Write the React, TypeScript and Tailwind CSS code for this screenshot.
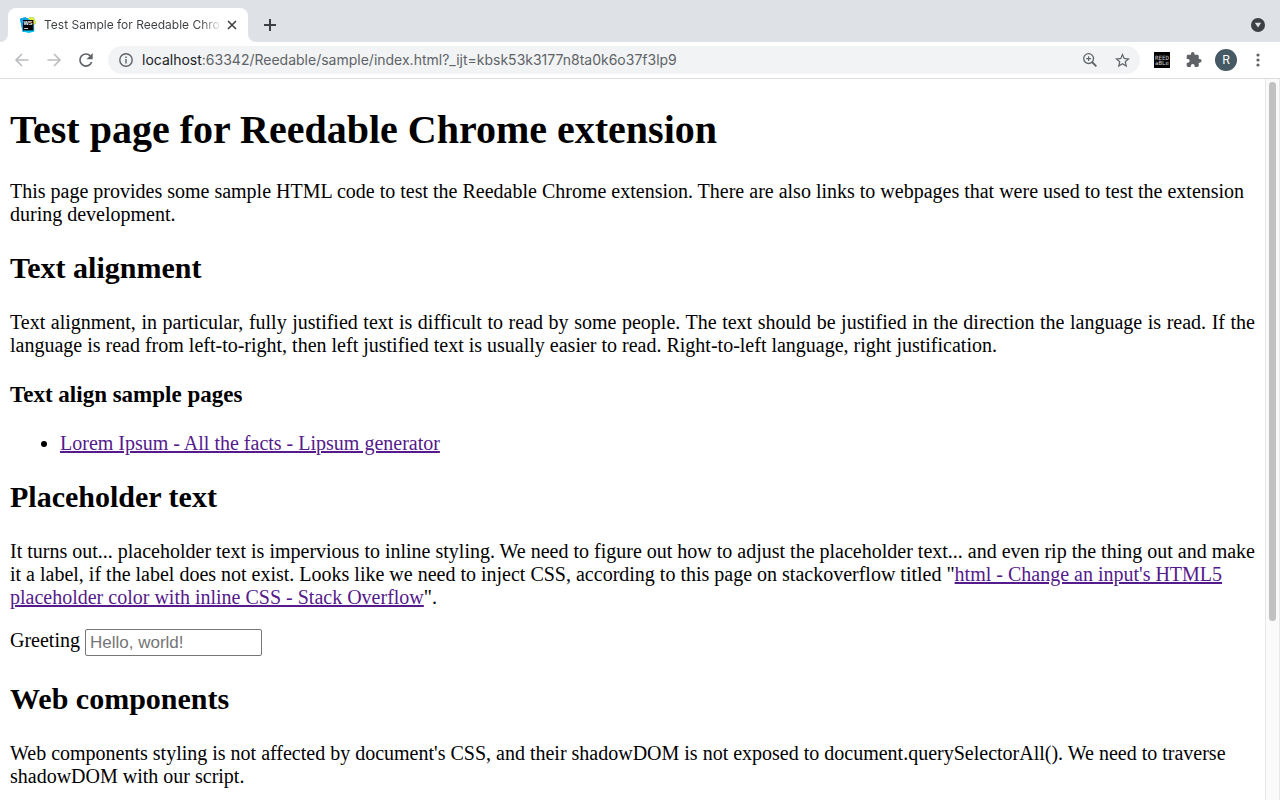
import React from "react";

function WebStormIcon() {
  return (
    <svg viewBox="0 0 16 16" className="size-4 shrink-0" aria-hidden="true">
      <path d="M2.5 14.5 0 1.8 5 .3l3 1.2L10.5 0 14 .8 16 6l-2 2 .4 6.4L9 16Z" fill="#07c3f2" />
      <path d="M0 1.8 5 .3l3 1.2L4 14.9l-1.5-.4Z" fill="#149ee8" />
      <path d="m8 1.6 2.5-1.6 3.5.8L16 6l-2 1.5-3-4Z" fill="#e5ec3a" />
      <rect x="3" y="3" width="10.4" height="10.4" fill="#000" />
      <text x="3.6" y="8.2" fontSize="5.6" fontWeight="700" fill="#fff" fontFamily="Liberation Sans, sans-serif">WS</text>
      <rect x="4.2" y="11" width="4" height="0.8" fill="#fff" />
    </svg>
  );
}

function ReedableIcon() {
  return (
    <svg viewBox="0 0 16 16" className="size-4" aria-hidden="true">
      <rect width="16" height="16" fill="#000" />
      <g fill="#d0d0d0" fontSize="5.8" fontFamily="DejaVu Sans Mono, monospace">
        <text x="1" y="7.8">REED</text>
        <text x="1" y="12.8">aBLe</text>
      </g>
    </svg>
  );
}

const iconButton = "flex size-7 shrink-0 items-center justify-center rounded-full";

function TabStrip() {
  return (
    <header className="flex h-[42px] shrink-0 items-end bg-[#dee1e6]">
      <svg viewBox="0 0 8 8" className="size-2 shrink-0" aria-hidden="true">
        <path d="M8 0v8H0a8 8 0 0 0 8-8Z" fill="#fff" />
      </svg>
      <div className="flex h-[34px] w-60 items-center rounded-t-lg bg-white pr-[6px] pl-3">
        <WebStormIcon />
        <span className="ml-2 h-5 grow overflow-hidden bg-linear-to-r from-[#3c4043] from-88% to-transparent bg-clip-text text-[12px] leading-5 whitespace-nowrap text-transparent">
          Test Sample for Reedable Chro
        </span>
        <button aria-label="Close tab" className="flex size-5 shrink-0 items-center justify-center">
          <svg viewBox="0 0 10 10" className="size-[10px]" stroke="#3c4043" strokeWidth="1.6">
            <path d="m1 1 8 8M9 1 1 9" />
          </svg>
        </button>
      </div>
      <svg viewBox="0 0 8 8" className="size-2 shrink-0" aria-hidden="true">
        <path d="M0 0v8h8a8 8 0 0 1-8-8Z" fill="#fff" />
      </svg>
      <button aria-label="New tab" className="flex h-[34px] w-7 items-center justify-center">
        <svg viewBox="0 0 12 12" className="size-3" stroke="#3c4043" strokeWidth="2">
          <path d="M6 0v12M0 6h12" />
        </svg>
      </button>
      <button aria-label="Search tabs" className="mr-2 ml-auto flex h-[34px] w-7 items-center justify-center">
        <svg viewBox="0 0 14 14" className="size-[14px]">
          <circle cx="7" cy="7" r="7" fill="#3c4043" />
          <path d="M3.8 4.8h6.4L7 9.6Z" fill="#dee1e6" />
        </svg>
      </button>
    </header>
  );
}

function Toolbar() {
  return (
    <nav className="flex h-[37px] shrink-0 items-center border-b border-[#dadce0] bg-white px-2" aria-label="Browser toolbar">
      <div className="flex gap-1">
        <button aria-label="Back" className={iconButton}>
          <svg viewBox="0 0 16 16" className="size-4" fill="none" stroke="#babcbe" strokeWidth="1.6">
            <path d="M14.5 8h-12M8 2 2 8l6 6" />
          </svg>
        </button>
        <button aria-label="Forward" className={iconButton}>
          <svg viewBox="0 0 16 16" className="size-4" fill="none" stroke="#babcbe" strokeWidth="1.6">
            <path d="M1.5 8h12M8 2l6 6-6 6" />
          </svg>
        </button>
        <button aria-label="Reload" className={iconButton}>
          <svg viewBox="0 0 16 16" className="size-4">
            <path d="M13.6 10A6 6 0 1 1 12.4 4" fill="none" stroke="#5f6368" strokeWidth="1.7" />
            <path d="M14.7 1v6.2H8.5Z" fill="#5f6368" />
          </svg>
        </button>
      </div>
      <div className="ml-2 flex h-7 grow items-center rounded-full bg-[#f1f3f4] pr-1 pl-[11px]">
        <svg viewBox="0 0 14 14" className="size-[14px] shrink-0" aria-hidden="true">
          <circle cx="7" cy="7" r="6.2" fill="none" stroke="#5f6368" strokeWidth="1.4" />
          <path d="M6.3 6h1.4v4.4H6.3ZM6.3 3.5h1.4v1.4H6.3Z" fill="#5f6368" />
        </svg>
        <span className="ml-[9px] grow text-[14px] leading-5 whitespace-nowrap text-[#5f6368]">
          <span className="text-[#202124]">localhost</span>:63342/Reedable/sample/index.html?_ijt=kbsk53k3177n8ta0k6o37f3lp9
        </span>
        <button aria-label="Zoom" className={iconButton}>
          <svg viewBox="0 0 14 14" className="size-[14px]" fill="none" stroke="#5f6368">
            <circle cx="5.6" cy="5.6" r="4.9" strokeWidth="1.3" />
            <path d="m9 9 4.4 4.4" strokeWidth="1.8" />
            <path d="M5.6 3.2V8M3.2 5.6H8" strokeWidth="1.1" />
          </svg>
        </button>
        <button aria-label="Bookmark this page" className={`${iconButton} ml-1`}>
          <svg viewBox="2 2 20 20" className="size-[15px]" fill="#5f6368">
            <path d="m22 9.24-7.19-.62L12 2 9.19 8.63 2 9.24l5.46 4.73L5.82 21 12 17.27 18.18 21l-1.63-7.03L22 9.24ZM12 15.4l-3.76 2.27 1-4.28-3.32-2.88 4.38-.38L12 6.1l1.71 4.04 4.38.38-3.32 2.88 1 4.28L12 15.4Z" />
          </svg>
        </button>
      </div>
      <div className="ml-2 flex gap-1">
        <button aria-label="Reedable" className={iconButton}>
          <ReedableIcon />
        </button>
        <button aria-label="Extensions" className={iconButton}>
          <svg viewBox="1 1 24 24" className="size-[17px]" fill="#5f6368">
            <path d="M20.5 11H19V7c0-1.1-.9-2-2-2h-4V3.5a2.5 2.5 0 0 0-5 0V5H4c-1.1 0-1.99.9-1.99 2v3.8H3.5c1.49 0 2.7 1.21 2.7 2.7s-1.21 2.7-2.7 2.7H2V20c0 1.1.9 2 2 2h3.8v-1.5c0-1.49 1.21-2.7 2.7-2.7 1.49 0 2.7 1.21 2.7 2.7V22H17c1.1 0 2-.9 2-2v-4h1.5a2.5 2.5 0 0 0 0-5Z" />
          </svg>
        </button>
        <button aria-label="Profile" className={iconButton}>
          <span className="flex size-[22px] items-center justify-center rounded-full bg-[#455a64] text-[12px] leading-none text-white">R</span>
        </button>
        <button aria-label="Menu" className={iconButton}>
          <svg viewBox="0 0 4 14" className="h-[14px] w-1" fill="#5f6368">
            <circle cx="2" cy="2" r="1.6" />
            <circle cx="2" cy="7" r="1.6" />
            <circle cx="2" cy="12" r="1.6" />
          </svg>
        </button>
      </div>
    </nav>
  );
}

const heading = "mt-6 mb-[26px] text-[30px] leading-[35px] font-bold";
const link = "text-[#551a8b] underline";

function SamplePage() {
  return (
    <main className="min-w-0 grow overflow-hidden px-[10px] font-['Liberation_Serif',serif] text-[20px] leading-[23px] text-black">
      <h1 className="my-7 text-[40px] leading-[45px] font-bold">Test page for Reedable Chrome extension</h1>
      <p className="my-5">
        This page provides some sample HTML code to test the Reedable Chrome extension. There are also links to webpages
        that were used to test the extension during development.
      </p>
      <h2 className={heading}>Text alignment</h2>
      <p className="my-5 text-justify">
        Text alignment, in particular, fully justified text is difficult to read by some people. The text should be
        justified in the direction the language is read. If the language is read from left-to-right, then left justified
        text is usually easier to read. Right-to-left language, right justification.
      </p>
      <h3 className="my-6 text-[23px] leading-[27px] font-bold">Text align sample pages</h3>
      <ul className="my-5 list-disc pl-[50px]">
        <li>
          <a href="#lipsum" className={link}>Lorem Ipsum - All the facts - Lipsum generator</a>
        </li>
      </ul>
      <h2 className={heading}>Placeholder text</h2>
      <p className="my-5">
        It turns out... placeholder text is impervious to inline styling. We need to figure out how to adjust the
        placeholder text... and even rip the thing out and make it a label, if the label does not exist. Looks like we
        need to inject CSS, according to this page on stackoverflow titled "
        <a href="#placeholder-color" className={link}>
          html - Change an input's HTML5 placeholder color with inline CSS - Stack Overflow
        </a>
        ".
      </p>
      <div className="my-5 flex h-7 items-start gap-[5px]">
        <label htmlFor="greeting">Greeting</label>
        <input
          id="greeting"
          type="text"
          placeholder="Hello, world!"
          className="h-[27px] w-[177px] rounded-xs border border-[#767676] bg-white px-1 font-['Liberation_Sans',sans-serif] text-[17px] placeholder:text-[#757575]"
        />
      </div>
      <h2 className={heading}>Web components</h2>
      <p className="my-5">
        Web components styling is not affected by document's CSS, and their shadowDOM is not exposed to
        document.querySelectorAll(). We need to traverse shadowDOM with our script.
      </p>
    </main>
  );
}

export default function App() {
  return (
    <div className="flex h-screen flex-col overflow-hidden bg-white font-[Inter,sans-serif]">
      <TabStrip />
      <Toolbar />
      <div className="flex min-h-0 grow">
        <SamplePage />
        <div className="w-[15px] shrink-0 border-x border-[#e8e8e8] bg-[#fafafa] px-[3px] pt-[3px]" aria-hidden="true">
          <div className="h-3/4 rounded-full bg-[#c1c1c1]" />
        </div>
      </div>
    </div>
  );
}
